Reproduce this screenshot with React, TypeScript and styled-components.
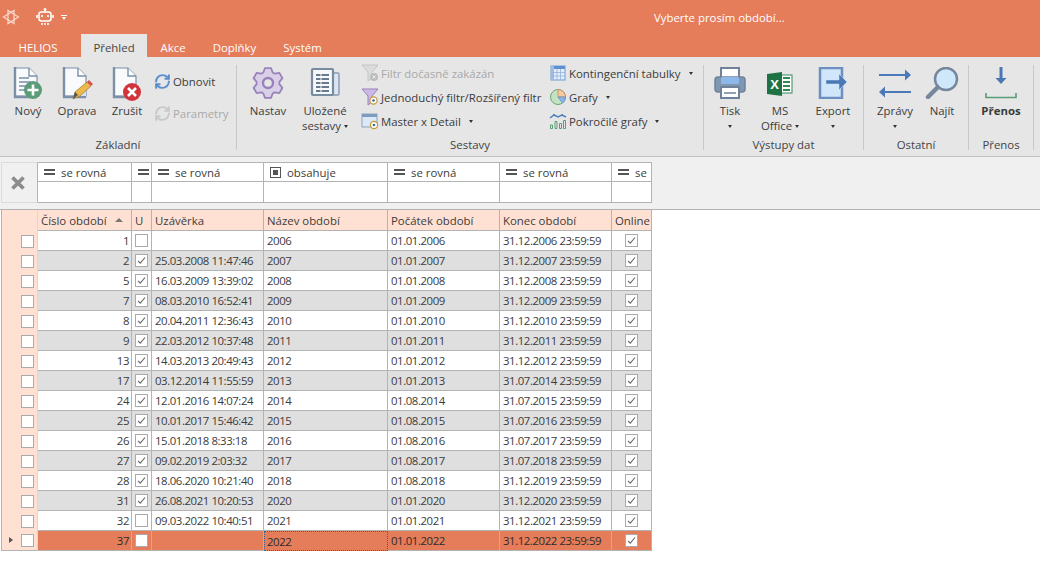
import * as React from 'react'
import styled, { createGlobalStyle } from 'styled-components'
import { RefreshCw } from 'lucide-react'

const GRID = '37px 94px 20px 112px 124px 112px 112px 40px'
const ORANGE = '#e57c5a'
const LINE = '#b3b3b3'

const Global = createGlobalStyle`
  html, body { margin: 0; padding: 0; background: #fff; }
  body {
    font-family: "Open Sans", "Noto Sans", sans-serif;
    font-size: 11.4px;
    color: #3c3c3c;
    overflow: hidden;
  }
`

const Page = styled.div`
  width: 1040px;
  height: 562px;
  display: flex;
  flex-direction: column;
  overflow: hidden;
`

const TitleBar = styled.header`
  height: 34px;
  background: ${ORANGE};
  display: flex;
  align-items: center;
  color: #fff;
  flex: none;
`

const QuickIcons = styled.div`
  display: flex;
  align-items: center;
  width: 654px;
  padding-left: 1px;
  box-sizing: border-box;
  gap: 15px;
`

const Caret = styled.span<{ $color?: string }>`
  display: inline-block;
  width: 0;
  height: 0;
  border-left: 2.5px solid transparent;
  border-right: 2.5px solid transparent;
  border-top: 3px solid ${({ $color }) => $color || '#333'};
`

const QuickCaret = styled.span`
  display: flex;
  flex-direction: column;
  align-items: center;
  gap: 1px;
  margin-left: -8px;
  &::before {
    content: '';
    width: 6px;
    height: 1px;
    background: #fff;
  }
`

const Title = styled.div`
  font-size: 11.4px;
  color: #fff;
`

const TabBar = styled.nav`
  height: 23px;
  background: ${ORANGE};
  display: flex;
  align-items: stretch;
  flex: none;
`

const Tab = styled.div<{ $active?: boolean; $first?: boolean }>`
  padding: 3px ${({ $active }) => ($active ? '12.5px' : '13.5px')} 0;
  margin: ${({ $first }) => ($first ? '0 10px 0 5px' : '0')};
  display: flex;
  align-items: center;
  font-size: 11.4px;
  color: ${({ $active }) => ($active ? '#444' : '#fff')};
  background: ${({ $active }) => ($active ? '#e6e6e6' : 'transparent')};
`

const Ribbon = styled.section`
  height: 100px;
  box-sizing: border-box;
  background: #e6e6e6;
  border-bottom: 1px solid #c2c2c2;
  padding-top: 8px;
  display: flex;
  flex: none;
`

const Group = styled.div<{ $w: number }>`
  width: ${({ $w }) => $w}px;
  height: 85px;
  box-sizing: border-box;
  border-right: 1px solid #c8c8c8;
  display: flex;
  flex-direction: column;
  flex: none;
`

const GroupBody = styled.div<{ $pad: number }>`
  flex: 1;
  display: flex;
  padding-left: ${({ $pad }) => $pad}px;
`

const GroupLabel = styled.div`
  text-align: center;
  line-height: 16px;
  height: 16px;
  margin-bottom: -3px;
  color: #444;
`

const LargeButton = styled.div<{ $w: number }>`
  width: ${({ $w }) => $w}px;
  display: flex;
  flex-direction: column;
  align-items: center;
  line-height: 15px;
  text-align: center;
  color: #3c3c3c;
  flex: none;
`

const LargeIcon = styled.div`
  height: 38px;
  display: flex;
  align-items: flex-start;
  justify-content: center;
  padding-top: 0;
  margin-top: 2px;
  margin-bottom: -2px;
`

const BoldLabel = styled.span`
  font-weight: 700;
`

const LabelCaret = styled(Caret)`
  margin-left: 3px;
  vertical-align: middle;
`

const AloneCaret = styled(Caret)`
  vertical-align: middle;
`

const SmallColumn = styled.div<{ $w: number; $gap: number; $top: number; $ml?: number }>`
  width: ${({ $w }) => $w}px;
  margin-left: ${({ $ml }) => $ml || 0}px;
  margin-top: ${({ $top }) => $top}px;
  display: flex;
  flex-direction: column;
  gap: ${({ $gap }) => $gap}px;
  flex: none;
`

const SmallButton = styled.div<{ $off?: boolean }>`
  height: 20px;
  display: flex;
  align-items: center;
  gap: 2px;
  white-space: nowrap;
  color: ${({ $off }) => ($off ? '#a9a9a9' : '#3c3c3c')};
  ${LabelCaret} {
    margin-left: 6px;
  }
`

const SmallIcon = styled.span`
  width: 18px;
  height: 18px;
  display: flex;
  align-items: center;
  justify-content: center;
  flex: none;
`

const FilterArea = styled.section`
  height: 53px;
  box-sizing: border-box;
  background: #f0f0f0;
  border-bottom: 1px solid ${LINE};
  padding: 5px 0 0 1px;
  flex: none;
`

const FilterGrid = styled.div`
  display: grid;
  grid-template-columns: ${GRID};
  grid-template-rows: 20px 21px;
  width: 652px;
`

const ClearButton = styled.div`
  grid-row: 1 / 3;
  box-sizing: border-box;
  border: 1px solid #dcdcdc;
  border-right: 1px solid ${LINE};
  padding-right: 3px;
  display: flex;
  align-items: center;
  justify-content: center;
`

const FilterCell = styled.div<{ $top?: boolean }>`
  box-sizing: border-box;
  background: #fff;
  border-right: 1px solid ${LINE};
  border-bottom: 1px solid ${LINE};
  border-top: ${({ $top }) => ($top ? `1px solid ${LINE}` : '0')};
  display: flex;
  align-items: center;
  gap: 6px;
  padding-left: 6px;
  overflow: hidden;
  white-space: nowrap;
`

const EqualsGlyph = styled.span`
  width: 11px;
  height: 2px;
  border-top: 2px solid #555;
  border-bottom: 2px solid #555;
  flex: none;
`

const ContainsGlyph = styled.span`
  width: 9px;
  height: 9px;
  border: 1px solid #555;
  box-shadow: inset 0 0 0 2px #fff, inset 0 0 0 7px #555;
  flex: none;
`

const Table = styled.section`
  margin-left: 1px;
  width: 651px;
`

const Row = styled.div<{ $kind: 'head' | 'odd' | 'even' | 'selected' }>`
  display: grid;
  grid-template-columns: ${GRID};
  height: ${({ $kind }) => ($kind === 'head' ? 21 : 20)}px;
  background: ${({ $kind }) =>
    $kind === 'head' ? '#ffe1d3' : $kind === 'even' ? '#dfdfdf' : $kind === 'selected' ? ORANGE : '#fff'};
  color: ${({ $kind }) => ($kind === 'selected' ? '#2c2c2c' : '#3c3c3c')};
`

const Cell = styled.div<{ $align?: 'right' | 'center'; $focus?: boolean; $digits?: boolean }>`
  box-sizing: border-box;
  border-right: 1px solid ${LINE};
  border-bottom: 1px solid ${LINE};
  padding: 0 2px 0 ${({ $align, $focus }) => ($align === 'center' || $focus ? 2 : 3)}px;
  display: flex;
  align-items: center;
  white-space: nowrap;
  overflow: hidden;
  letter-spacing: ${({ $digits }) => ($digits ? '-0.42px' : 'normal')};
  justify-content: ${({ $align }) =>
    $align === 'right' ? 'flex-end' : $align === 'center' ? 'center' : 'flex-start'};
  ${({ $focus }) => ($focus ? 'border: 1px dotted #1b6e9c;' : '')}
`

const HeadCell = styled(Cell)`
  justify-content: space-between;
  padding-right: 8px;
`

const RowHeader = styled.div<{ $last?: boolean }>`
  box-sizing: border-box;
  background: #ffe1d3;
  border-left: 1px solid ${LINE};
  border-right: 1px solid #f2cfc0;
  border-bottom: ${({ $last }) => ($last ? `1px solid ${LINE}` : '0')};
  position: relative;
  display: flex;
  align-items: center;
  padding-left: 19px;
`

const RowMarker = styled.span`
  position: absolute;
  left: 7px;
  top: 6px;
  border-top: 3.5px solid transparent;
  border-bottom: 3.5px solid transparent;
  border-left: 4px solid #555;
`

const SortArrow = styled.span`
  border-left: 4px solid transparent;
  border-right: 4px solid transparent;
  border-bottom: 4px solid #777;
`

const CheckBox = styled.span`
  width: 13px;
  height: 13px;
  box-sizing: border-box;
  background: #fff;
  border: 1px solid #aaa;
  display: flex;
  align-items: center;
  justify-content: center;
  flex: none;
`

const Check = ({ on }: { on?: boolean }) => (
  <CheckBox>
    {on && (
      <svg width="9" height="9" viewBox="0 0 9 9">
        <path d="M1 4.8 3.3 7.2 8 1.5" fill="none" stroke="#666" strokeWidth="1.1" />
      </svg>
    )}
  </CheckBox>
)

const Star = () => (
  <svg width="20" height="20" viewBox="0 0 20 20" fill="none" stroke="#f9d5c7" strokeWidth="1.3">
    <path d="M2.500 10 13 3.500v13z" />
    <path d="M17.500 10 7 3.500v13z" />
  </svg>
)

const RobotIcon = () => (
  <svg width="18" height="18" viewBox="0 0 18 18" fill="none" stroke="#fff">
    <path d="M9 1v3" strokeWidth="1.4" />
    <circle cx="9" cy="1.500" r="1" fill="#fff" />
    <rect x="3" y="4" width="12" height="9" rx="2.500" strokeWidth="1.6" />
    <path d="M1 7v3M17 7v3" strokeWidth="1.6" />
    <path d="M6 8h.01M12 8h.01" strokeWidth="2.2" strokeLinecap="round" />
    <path d="M5 16h8" strokeWidth="1.6" strokeDasharray="2 1" />
  </svg>
)

const Doc = ({ lines, children }: { lines?: boolean; children?: React.ReactNode }) => (
  <svg width="34" height="34" viewBox="0 0 34 34">
    <path d="M4 1h14l8 8v20H4z" fill="#f8fafc" stroke="#7b90a8" strokeWidth="1.2" />
    <path d="M4 0v30h22" fill="none" stroke="#7b90a8" strokeWidth="2.400" />
    <path d="M18 1v8h8" fill="#fff" stroke="#7b90a8" strokeWidth="1.400" />
    {lines && <path d="M8 11h10M8 15h12M8 19h8M8 23h6" stroke="#7b90a8" strokeWidth="1.500" />}
    {children}
  </svg>
)

const NewIcon = () => (
  <Doc lines>
    <circle cx="22" cy="23" r="9" fill="#5a9c77" />
    <path d="M22 17.500v11M16.500 23h11" stroke="#fff" strokeWidth="2.600" />
  </Doc>
)

const EditIcon = () => (
  <Doc>
    <path d="M16 24h10v5H14z" fill="#d5e5f5" />
    <path d="M13 32 15 25 27 15 31 19 20 29z" fill="#eeb94b" stroke="#a5813c" strokeWidth="0.800" />
    <path d="M27 15 29 13 33 17 31 19z" fill="#d9534f" />
    <path d="M13 32 15 25 18 28z" fill="#555" />
  </Doc>
)

const CancelIcon = () => (
  <Doc>
    <circle cx="22" cy="25" r="9" fill="#d2343c" />
    <path d="M18 21l8 8M26 21l-8 8" stroke="#fff" strokeWidth="2.600" />
  </Doc>
)

// six teeth, one of them pointing straight up
const gearPath = (() => {
  const pts: string[] = []
  for (let k = 0; k < 6; k++) {
    const a = (-90 + k * 60) * (Math.PI / 180)
    const at = (r: number, off: number) =>
      `${(16 + r * Math.cos(a + off)).toFixed(1)} ${(16 + r * Math.sin(a + off)).toFixed(1)}`
    pts.push(at(11.5, -0.42), at(15.2, -0.2), at(15.2, 0.2), at(11.5, 0.42))
  }
  return `M${pts.join('L')}z`
})()

const GearIcon = () => (
  <svg width="32" height="32" viewBox="0 0 32 32">
    <path d={gearPath} fill="#d9cfe9" stroke="#9a82ba" strokeWidth="1.800" strokeLinejoin="round" />
    <circle cx="16" cy="16" r="5" fill="#e6e6e6" stroke="#9a82ba" strokeWidth="2.400" />
  </svg>
)

const ReportsIcon = () => (
  <svg width="30" height="30" viewBox="0 0 30 30">
    <rect x="22" y="6" width="7" height="22" rx="1" fill="#d9e6f2" stroke="#8a9bb0" strokeWidth="1.400" />
    <rect x="2" y="2" width="21" height="26" rx="1" fill="#f6f8fa" stroke="#778ba1" strokeWidth="2.200" />
    <path d="M6 8h13M6 12h13M6 16h13M6 20h13M6 24h13" stroke="#667a90" strokeWidth="1.800" />
    <path d="M11 7v18" stroke="#f6f8fa" strokeWidth="1" />
  </svg>
)

const Funnel = ({ off }: { off?: boolean }) => (
  <svg width="18" height="18" viewBox="0 0 18 18">
    <path d="M1 1h16L11 8v6l-4 3V8z" fill={off ? '#dcdcdc' : '#cdb9e6'} stroke={off ? '#c4c4c4' : '#9a83b8'} />
    {off ? (
      <>
        <circle cx="13" cy="13" r="4" fill="#bdbdbd" />
        <path d="M11.500 11.500l3 3M14.500 11.500l-3 3" stroke="#eee" />
      </>
    ) : (
      <>
        <circle cx="12.500" cy="12.500" r="3.600" fill="#fff" stroke="#c79a35" strokeWidth="1.200" />
        <circle cx="12.500" cy="12.500" r="1.300" fill="#3d6d9c" />
      </>
    )}
  </svg>
)

const MasterIcon = () => (
  <svg width="18" height="18" viewBox="0 0 18 18">
    <rect x="1" y="2" width="15" height="13" fill="#dce8f6" stroke="#8ba3bf" />
    <rect x="1" y="2" width="15" height="3" fill="#7d9cc0" />
    <circle cx="13" cy="13" r="3.600" fill="#fff" stroke="#c79a35" strokeWidth="1.200" />
    <circle cx="13" cy="13" r="1.300" fill="#3d6d9c" />
  </svg>
)

const PivotIcon = () => (
  <svg width="16" height="16" viewBox="0 0 16 16">
    <rect x="1" y="1" width="14" height="14" fill="#e4eefa" stroke="#6f9bd1" />
    <rect x="1" y="1" width="14" height="3" fill="#5f8fcc" />
    <rect x="1" y="1" width="3" height="14" fill="#9dbde3" />
    <path d="M7 4v11M10.500 4v11M1 7.500h14M1 11h14" stroke="#8fb1dc" strokeWidth="0.800" />
  </svg>
)

const PieIcon = () => (
  <svg width="18" height="18" viewBox="0 0 18 18">
    <circle cx="9" cy="9" r="7.500" fill="#c3e2c4" stroke="#6aa771" />
    <path d="M9 9V1.500A7.500 7.500 0 0 1 16.500 9z" fill="#f7c9a2" stroke="#c58a56" strokeWidth="0.800" />
    <path d="M9 9h7.500a7.500 7.500 0 0 1-3 6z" fill="#8db5e6" stroke="#5f8fcc" strokeWidth="0.800" />
  </svg>
)

const AdvancedChartIcon = () => (
  <svg width="18" height="18" viewBox="0 0 18 18" fill="none">
    <path d="M1 6 5 3l4 2 4-2 4 2" stroke="#4f81bd" strokeWidth="1.500" />
    <circle cx="5" cy="3" r="1" fill="#4f81bd" />
    <circle cx="13" cy="3" r="1" fill="#4f81bd" />
    <path d="M1.500 13h2v3.500h-2zM6 9.500h2v7H6zM10.500 11.500h2v5h-2zM14.500 8.500h2v8h-2z" stroke="#5a9c77" />
  </svg>
)

const PrinterIcon = () => (
  <svg width="34" height="32" viewBox="0 0 34 32">
    <rect x="8" y="1" width="18" height="14" fill="#fff" stroke="#6f8299" strokeWidth="2" />
    <rect x="2" y="10" width="30" height="15" rx="3" fill="#7f97b2" stroke="#6f8299" strokeWidth="1.500" />
    <rect x="8" y="10" width="18" height="7" rx="1" fill="#8fb8ea" />
    <rect x="8" y="20" width="18" height="11" fill="#fff" stroke="#6f8299" strokeWidth="2" />
    <path d="M11 26h12" stroke="#6f8299" strokeWidth="1.500" />
  </svg>
)

const ExcelIcon = () => (
  <svg width="26" height="30" viewBox="0 0 26 30">
    <rect x="9" y="8" width="16" height="18" fill="#fff" stroke="#2f8a57" />
    <path d="M16 11h7M16 15h7M16 19h7M16 23h7" stroke="#2f8a57" strokeWidth="2" />
    <path d="M0 7 15 5v24L0 27z" fill="#1f7244" />
    <text x="7.500" y="22" fontSize="13" fontWeight="700" fontFamily="Liberation Sans, sans-serif" fill="#fff" textAnchor="middle">
      X
    </text>
  </svg>
)

const ExportIcon = () => (
  <svg width="30" height="32" viewBox="0 0 30 32">
    <path d="M2 1h22v30H2z" fill="#cfe6fb" stroke="#6d8fbf" strokeWidth="2.500" />
    <path d="M8 13h13V7l8 8-8 8v-6H8z" fill="#4a78b5" stroke="#cfe6fb" strokeWidth="0.500" />
  </svg>
)

const ArrowsIcon = () => (
  <svg width="34" height="32" viewBox="0 0 34 32" fill="#4a7ab8">
    <path d="M1 7h26v2H1z" />
    <path d="M27 2.500 33 8l-6 5.500z" />
    <path d="M7 24h26v2H7z" />
    <path d="M7 19.500 1 25l6 5.500z" />
  </svg>
)

const SearchIcon = () => (
  <svg width="34" height="32" viewBox="0 0 34 32">
    <circle cx="21" cy="12" r="11" fill="#cfe7fb" stroke="#77879b" strokeWidth="2.500" />
    <path d="M12.500 20.500 3 30" stroke="#77879b" strokeWidth="4.500" strokeLinecap="round" />
  </svg>
)

const TransferIcon = () => (
  <svg width="34" height="32" viewBox="0 0 34 32">
    <path d="M15.500 0h3v11h4l-5.500 6-5.500-6h4z" fill="#4a78b5" />
    <path d="M2 26v4.500h30v-4.500" fill="none" stroke="#5a9c77" strokeWidth="1.600" />
  </svg>
)

const ClearIcon = () => (
  <svg width="14" height="14" viewBox="0 0 14 14">
    <path d="M1.500 1.500l11 11M12.500 1.500l-11 11" stroke="#8c8c8c" strokeWidth="3.800" />
  </svg>
)

const filters = [
  { icon: 'eq', text: 'se rovná' },
  { icon: 'eq', text: '' },
  { icon: 'eq', text: 'se rovná' },
  { icon: 'box', text: 'obsahuje' },
  { icon: 'eq', text: 'se rovná' },
  { icon: 'eq', text: 'se rovná' },
  { icon: 'eq', text: 'se' },
]

type Period = [number, boolean, string, string, string, string]

const periods: Period[] = [
  [1, false, '', '2006', '01.01.2006', '31.12.2006 23:59:59'],
  [2, true, '25.03.2008 11:47:46', '2007', '01.01.2007', '31.12.2007 23:59:59'],
  [5, true, '16.03.2009 13:39:02', '2008', '01.01.2008', '31.12.2008 23:59:59'],
  [7, true, '08.03.2010 16:52:41', '2009', '01.01.2009', '31.12.2009 23:59:59'],
  [8, true, '20.04.2011 12:36:43', '2010', '01.01.2010', '31.12.2010 23:59:59'],
  [9, true, '22.03.2012 10:37:48', '2011', '01.01.2011', '31.12.2011 23:59:59'],
  [13, true, '14.03.2013 20:49:43', '2012', '01.01.2012', '31.12.2012 23:59:59'],
  [17, true, '03.12.2014 11:55:59', '2013', '01.01.2013', '31.07.2014 23:59:59'],
  [24, true, '12.01.2016 14:07:24', '2014', '01.08.2014', '31.07.2015 23:59:59'],
  [25, true, '10.01.2017 15:46:42', '2015', '01.08.2015', '31.07.2016 23:59:59'],
  [26, true, '15.01.2018 8:33:18', '2016', '01.08.2016', '31.07.2017 23:59:59'],
  [27, true, '09.02.2019 2:03:32', '2017', '01.08.2017', '31.07.2018 23:59:59'],
  [28, true, '18.06.2020 10:21:40', '2018', '01.08.2018', '31.12.2019 23:59:59'],
  [31, true, '26.08.2021 10:20:53', '2020', '01.01.2020', '31.12.2020 23:59:59'],
  [32, false, '09.03.2022 10:40:51', '2021', '01.01.2021', '31.12.2021 23:59:59'],
  [37, false, '', '2022', '01.01.2022', '31.12.2022 23:59:59'],
]

const App: React.FC = () => (
  <Page>
    <Global />
    <TitleBar>
      <QuickIcons>
        <Star />
        <RobotIcon />
        <QuickCaret>
          <Caret $color="#fff" />
        </QuickCaret>
      </QuickIcons>
      <Title>Vyberte prosím období...</Title>
    </TitleBar>
    <TabBar>
      <Tab $first>HELIOS</Tab>
      <Tab $active>Přehled</Tab>
      <Tab>Akce</Tab>
      <Tab>Doplňky</Tab>
      <Tab>Systém</Tab>
    </TabBar>
    <Ribbon>
      <Group $w={237}>
        <GroupBody $pad={5}>
          <LargeButton $w={46}>
            <LargeIcon><NewIcon /></LargeIcon>
            Nový
          </LargeButton>
          <LargeButton $w={52}>
            <LargeIcon><EditIcon /></LargeIcon>
            Oprava
          </LargeButton>
          <LargeButton $w={48}>
            <LargeIcon><CancelIcon /></LargeIcon>
            Zrušit
          </LargeButton>
          <SmallColumn $w={84} $gap={12} $top={6} $ml={2}>
            <SmallButton>
              <SmallIcon><RefreshCw size={17} strokeWidth={2.8} color="#5b8fd0" /></SmallIcon>
              Obnovit
            </SmallButton>
            <SmallButton $off>
              <SmallIcon><RefreshCw size={17} strokeWidth={2.8} color="#c9c9c9" /></SmallIcon>
              Parametry
            </SmallButton>
          </SmallColumn>
        </GroupBody>
        <GroupLabel>Základní</GroupLabel>
      </Group>
      <Group $w={467}>
        <GroupBody $pad={6}>
          <LargeButton $w={50}>
            <LargeIcon><GearIcon /></LargeIcon>
            Nastav
          </LargeButton>
          <LargeButton $w={64}>
            <LargeIcon><ReportsIcon /></LargeIcon>
            Uložené
            <span>sestavy<LabelCaret /></span>
          </LargeButton>
          <SmallColumn $w={188} $gap={4} $top={-2} $ml={4}>
            <SmallButton $off>
              <SmallIcon><Funnel off /></SmallIcon>
              Filtr dočasně zakázán
            </SmallButton>
            <SmallButton>
              <SmallIcon><Funnel /></SmallIcon>
              Jednoduchý filtr/Rozšířený filtr
            </SmallButton>
            <SmallButton>
              <SmallIcon><MasterIcon /></SmallIcon>
              Master x Detail<LabelCaret />
            </SmallButton>
          </SmallColumn>
          <SmallColumn $w={150} $gap={4} $top={-2}>
            <SmallButton>
              <SmallIcon><PivotIcon /></SmallIcon>
              Kontingenční tabulky<LabelCaret />
            </SmallButton>
            <SmallButton>
              <SmallIcon><PieIcon /></SmallIcon>
              Grafy<LabelCaret />
            </SmallButton>
            <SmallButton>
              <SmallIcon><AdvancedChartIcon /></SmallIcon>
              Pokročilé grafy<LabelCaret />
            </SmallButton>
          </SmallColumn>
        </GroupBody>
        <GroupLabel>Sestavy</GroupLabel>
      </Group>
      <Group $w={160}>
        <GroupBody $pad={2}>
          <LargeButton $w={48}>
            <LargeIcon><PrinterIcon /></LargeIcon>
            Tisk
            <span><AloneCaret /></span>
          </LargeButton>
          <LargeButton $w={52}>
            <LargeIcon><ExcelIcon /></LargeIcon>
            MS
            <span>Office<LabelCaret /></span>
          </LargeButton>
          <LargeButton $w={54}>
            <LargeIcon><ExportIcon /></LargeIcon>
            Export
            <span><AloneCaret /></span>
          </LargeButton>
        </GroupBody>
        <GroupLabel>Výstupy dat</GroupLabel>
      </Group>
      <Group $w={105}>
        <GroupBody $pad={6}>
          <LargeButton $w={50}>
            <LargeIcon><ArrowsIcon /></LargeIcon>
            Zprávy
            <span><AloneCaret /></span>
          </LargeButton>
          <LargeButton $w={44}>
            <LargeIcon><SearchIcon /></LargeIcon>
            Najít
          </LargeButton>
        </GroupBody>
        <GroupLabel>Ostatní</GroupLabel>
      </Group>
      <Group $w={65}>
        <GroupBody $pad={0}>
          <LargeButton $w={64}>
            <LargeIcon><TransferIcon /></LargeIcon>
            <BoldLabel>Přenos</BoldLabel>
          </LargeButton>
        </GroupBody>
        <GroupLabel>Přenos</GroupLabel>
      </Group>
    </Ribbon>
    <FilterArea>
      <FilterGrid>
        <ClearButton><ClearIcon /></ClearButton>
        {filters.map((f, i) => (
          <FilterCell $top key={i}>
            {f.icon === 'eq' ? <EqualsGlyph /> : <ContainsGlyph />}
            {f.text}
          </FilterCell>
        ))}
        {filters.map((_, i) => (
          <FilterCell key={i} />
        ))}
      </FilterGrid>
    </FilterArea>
    <Table>
      <Row $kind="head">
        <RowHeader />
        <HeadCell>Číslo období<SortArrow /></HeadCell>
        <Cell>U</Cell>
        <Cell>Uzávěrka</Cell>
        <Cell>Název období</Cell>
        <Cell>Počátek období</Cell>
        <Cell>Konec období</Cell>
        <Cell>Online</Cell>
      </Row>
      {periods.map(([id, closed, closedAt, name, from, to], i) => {
        const selected = id === 37
        return (
          <Row key={id} $kind={selected ? 'selected' : i % 2 ? 'even' : 'odd'}>
            <RowHeader $last={selected}>
              {selected && <RowMarker />}
              <Check />
            </RowHeader>
            <Cell $align="right" $digits>{id}</Cell>
            <Cell $align="center"><Check on={closed} /></Cell>
            <Cell $digits>{closedAt}</Cell>
            <Cell $digits $focus={selected}>{name}</Cell>
            <Cell $digits>{from}</Cell>
            <Cell $digits>{to}</Cell>
            <Cell $align="center"><Check on /></Cell>
          </Row>
        )
      })}
    </Table>
  </Page>
)

export default App
